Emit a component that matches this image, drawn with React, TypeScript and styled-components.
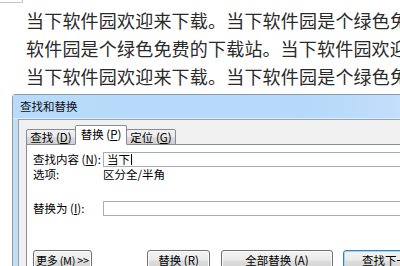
import React from "react";
import styled, { createGlobalStyle } from "styled-components";

const Global = createGlobalStyle`
  html, body { margin: 0; padding: 0; background: #ffffff; }
  body { font-family: "Noto Sans CJK SC", "Noto Sans", sans-serif; }
`;

const Page = styled.div`
  width: 400px;
  height: 266px;
  overflow: hidden;
  background: #ffffff;
`;

const CornerBox = styled.div`
  width: 22px;
  height: 2px;
  border-right: 1px solid #c6c6c6;
  border-bottom: 1px solid #c6c6c6;
`;

const DocText = styled.div`
  margin-top: 3px;
  padding-left: 26px;
  font-family: "Noto Sans CJK SC", sans-serif;
  font-size: 18px;
  line-height: 28px;
  letter-spacing: 0.2px;
  color: #2a2a2a;
  white-space: nowrap;
`;

const NarrowStop = styled.span`
  letter-spacing: -7px;
  margin-right: 7px;
`;

const Window = styled.div`
  margin-top: 4px;
  margin-left: 12px;
  width: 420px;
  height: 200px;
  border: 1px solid #8d9aa8;
  border-right: none;
  border-bottom: none;
  border-radius: 4px 0 0 0;
  background: linear-gradient(90deg, #c3ddf3 0%, #bcdbf9 40%, #c4e1fb 100%);
  display: flex;
  flex-direction: column;
  font-size: 11.5px;
  color: #000;
`;

const TitleBar = styled.div`
  height: 22px;
  display: flex;
  align-items: center;
  padding-left: 7px;
  padding-bottom: 1px;
  color: #111;
  background: linear-gradient(90deg, #b8dafb 0%, #b6d8fa 70%, #c6e2fb 100%);
  border-bottom: 1px solid #dfeefc;
`;

const Client = styled.div`
  flex: 1;
  margin-left: 5px;
  border-top: 1px solid #96a3b1;
  border-left: 1px solid #96a3b1;
  background: #f0f0f0;
  padding: 5px 0 0 7px;
  display: flex;
  flex-direction: column;
`;

const TabStrip = styled.div`
  display: flex;
  align-items: flex-end;
  height: 20px;
  position: relative;
  z-index: 1;
  margin-bottom: -1px;
`;

const Tab = styled.div<{ $active?: boolean }>`
  box-sizing: border-box;
  width: ${(p) => (p.$active ? 52 : 50)}px;
  height: ${(p) => (p.$active ? 20 : 16)}px;
  margin: ${(p) => (p.$active ? "0 -1px" : "0")};
  border: 1px solid #898c95;
  border-bottom: ${(p) => (p.$active ? "1px solid #ffffff" : "1px solid #898c95")};
  border-radius: 2px 2px 0 0;
  background: ${(p) =>
    p.$active
      ? "#ffffff"
      : "linear-gradient(180deg, #f2f2f2 0%, #ebebeb 50%, #dddddd 51%, #cfcfcf 100%)"};
  line-height: 14px;
  display: flex;
  align-items: center;
  justify-content: center;
  white-space: nowrap;
  position: relative;
  z-index: ${(p) => (p.$active ? 2 : 1)};
  padding-bottom: ${(p) => (p.$active ? "3px" : "0")};
`;

const Panel = styled.div`
  flex: 1;
  border-top: 1px solid #898c95;
  border-left: 1px solid #898c95;
  background: #ffffff;
  padding: 7px 0 0 6px;
  display: flex;
  flex-direction: column;
`;

const FormRow = styled.div<{ $gap?: number }>`
  display: grid;
  grid-template-columns: 70px 1fr;
  align-items: center;
  height: 15px;
  line-height: 15px;
  margin-top: ${(p) => p.$gap ?? 0}px;
`;

const Label = styled.span`
  white-space: nowrap;
`;

const Field = styled.div`
  box-sizing: border-box;
  height: 15px;
  border: 1px solid #abadb3;
  border-top-color: #a5acb5;
  background: #fff;
  display: flex;
  align-items: center;
  padding-left: 3px;
  line-height: 13px;
`;

const Caret = styled.span`
  display: inline-block;
  width: 1px;
  height: 11px;
  background: #000;
  margin-left: 1px;
`;

const ButtonRow = styled.div`
  display: flex;
  margin-top: 34px;
`;

const Button = styled.div<{ $w: number; $ml?: number; $default?: boolean }>`
  box-sizing: border-box;
  width: ${(p) => p.$w}px;
  height: 22px;
  margin-left: ${(p) => p.$ml ?? 0}px;
  border: 1px solid ${(p) => (p.$default ? "#3c7fb1" : "#707070")};
  border-radius: 3px;
  box-shadow: inset 0 0 0 1px ${(p) => (p.$default ? "#9fd6ef" : "#fcfcfc")};
  background: linear-gradient(180deg, #f2f2f2 0%, #ebebeb 45%, #dddddd 50%, #cfcfcf 100%);
  line-height: 14px;
  display: flex;
  align-items: center;
  justify-content: center;
  white-space: nowrap;
  flex-shrink: 0;
  padding-bottom: 3px;
`;

const Small = styled.span`
  font-size: 11px;
  letter-spacing: -0.3px;
`;

const U = styled.span`
  text-decoration: underline;
`;

export default function App() {
  return (
    <Page>
      <Global />
      <CornerBox />
      <DocText>
        <div>当下软件园欢迎来下载。当下软件园是个绿色免费的下载站</div>
        <div>
          软件园是个绿色免费的下载站<NarrowStop>。</NarrowStop>当下软件园欢迎来下载
        </div>
        <div>当下软件园欢迎来下载。当下软件园是个绿色免费的下载站</div>
      </DocText>
      <Window>
        <TitleBar>查找和替换</TitleBar>
        <Client>
          <TabStrip>
            <Tab>查找 (<U>D</U>)</Tab>
            <Tab $active>替换 (<U>P</U>)</Tab>
            <Tab>定位 (<U>G</U>)</Tab>
          </TabStrip>
          <Panel>
            <FormRow>
              <Label>查找内容 (<U>N</U>):</Label>
              <Field>
                当下<Caret />
              </Field>
            </FormRow>
            <FormRow>
              <Label>选项:</Label>
              <span>区分全/半角</span>
            </FormRow>
            <FormRow $gap={19}>
              <Label>替换为 (<U>I</U>):</Label>
              <Field />
            </FormRow>
            <ButtonRow>
              <Button $w={59}>
                <Small>更多 (<U>M</U>) &gt;&gt;</Small>
              </Button>
              <Button $w={63} $ml={55}>替换 (<U>R</U>)</Button>
              <Button $w={112} $ml={11}>全部替换 (<U>A</U>)</Button>
              <Button $w={112} $ml={10} $default>查找下一处 (<U>F</U>)</Button>
            </ButtonRow>
          </Panel>
        </Client>
      </Window>
    </Page>
  );
}
